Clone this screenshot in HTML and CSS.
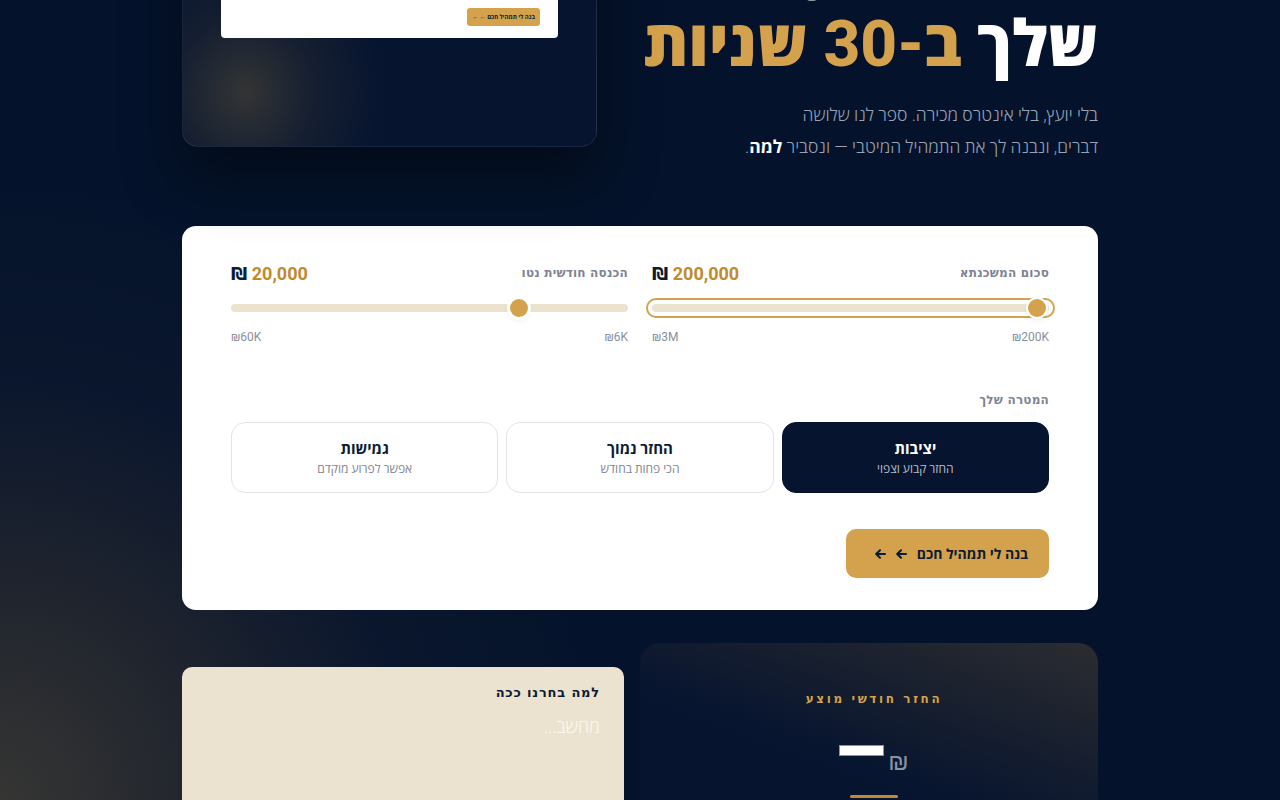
FILE: index.html
```html
<!DOCTYPE html>
<html lang="he" dir="rtl">
<head>
<meta charset="utf-8">
<title>מחשבון תמהיל משכנתא</title>
<link rel="stylesheet" href="styles.css">
</head>
<body>
<div class="page">
  <section class="hero">
    <div class="hero-text">
      <h1 class="title"><span class="muted">בנה את</span> <span class="strong">התמהיל</span><br>שלך <span class="gold">ב-30 שניות</span></h1>
      <p class="lead">בלי יועץ, בלי אינטרס מכירה. ספר לנו שלושה<br>דברים, ונבנה לך את התמהיל המיטבי — ונסביר <b>למה</b>.</p>
    </div>
    <div class="preview">
      <div class="mock">
        <div class="mock-btn">בנה לי תמהיל חכם ← ←</div>
      </div>
    </div>
  </section>

  <section class="calc">
    <div class="sliders">
      <div class="field">
        <div class="field-head">
          <span class="label">סכום המשכנתא</span>
          <span class="value"><span class="cur">₪</span> 200,000</span>
        </div>
        <div class="track focus">
          <span class="thumb" style="right:0%"></span>
        </div>
        <div class="range"><span>₪200K</span><span>₪3M</span></div>
      </div>
      <div class="field">
        <div class="field-head">
          <span class="label">הכנסה חודשית נטו</span>
          <span class="value"><span class="cur">₪</span> 20,000</span>
        </div>
        <div class="track">
          <span class="thumb" style="right:27.4%"></span>
        </div>
        <div class="range"><span>₪6K</span><span>₪60K</span></div>
      </div>
    </div>

    <div class="label goal-label">המטרה שלך</div>
    <div class="goals">
      <div class="goal active"><strong>יציבות</strong><span>החזר קבוע וצפוי</span></div>
      <div class="goal"><strong>החזר נמוך</strong><span>הכי פחות בחודש</span></div>
      <div class="goal"><strong>גמישות</strong><span>אפשר לפרוע מוקדם</span></div>
    </div>

    <div class="actions">
      <button class="cta">בנה לי תמהיל חכם
        <svg class="arrow" width="11" height="10" viewBox="0 0 11 10"><path d="M10 5H1.5M5 1.2L1.2 5 5 8.8" fill="none" stroke="#0b1b33" stroke-width="2" stroke-linecap="round" stroke-linejoin="round"/></svg>
        <svg class="arrow" width="11" height="10" viewBox="0 0 11 10"><path d="M10 5H1.5M5 1.2L1.2 5 5 8.8" fill="none" stroke="#0b1b33" stroke-width="2" stroke-linecap="round" stroke-linejoin="round"/></svg>
      </button>
    </div>
  </section>

  <section class="results">
    <div class="result">
      <div class="result-label">החזר חודשי מוצע</div>
      <div class="amount"><span class="skeleton"></span><span class="shekel">₪</span></div>
      <div class="underline"></div>
    </div>
    <div class="why">
      <div class="why-title">למה בחרנו ככה</div>
      <div class="why-text">מחשב...</div>
    </div>
  </section>
</div>
</body>
</html>
```

FILE: styles.css
```css
* { box-sizing: border-box; }
html, body { margin: 0; padding: 0; }
body {
  width: 1280px;
  height: 800px;
  overflow: hidden;
  font-family: "Roboto", "Open Sans", sans-serif;
  color: #0b1b33;
  background:
    radial-gradient(ellipse 600px 620px at 0% 100%, rgba(56,55,52,0.95) 0%, rgba(38,40,46,0.8) 35%, rgba(20,28,48,0.4) 68%, rgba(4,19,43,0) 100%),
    #04132b;
}
.page {
  width: 916px;
  margin: -200px auto 0;
}

/* hero */
.hero {
  display: grid;
  grid-template-columns: 458px 415px;
  column-gap: 43px;
  align-items: start;
}
.hero-text { padding-top: 146px; text-align: right; }
.title {
  margin: 0;
  font-size: 64px;
  line-height: 66px;
  font-weight: 800;
  color: #fff;
}
.title .muted { color: #8a93a6; font-weight: 300; }
.title .gold { color: #d4a24c; }
.lead {
  margin: 21px 0 0;
  font-size: 17.5px;
  line-height: 32px;
  font-weight: 300;
  color: #9aa2b3;
}
.lead b { color: #fff; font-weight: 700; }

.preview {
  height: 300px;
  margin-top: 47px;
  border-radius: 16px;
  border: 1px solid rgba(255,255,255,0.08);
  background:
    radial-gradient(ellipse 140px 150px at 15% 82%, rgba(66,63,54,0.75) 0%, rgba(40,44,50,0.45) 50%, rgba(6,20,48,0) 100%),
    #061430;
  box-shadow: 0 30px 60px rgba(0,0,0,0.45);
  padding: 38px 38px 0;
}
.mock {
  height: 152px;
  background: #fff;
  border-radius: 4px;
  display: flex;
  align-items: flex-end;
  padding: 0 18px 12px;
}
.mock-btn {
  background: #d4a24c;
  color: #0b1b33;
  font-size: 6px;
  font-weight: 700;
  border-radius: 3px;
  width: 73px;
  height: 18px;
  display: flex;
  align-items: center;
  justify-content: center;
}

/* calculator card */
.calc {
  margin-top: 63px;
  background: #fff;
  border-radius: 14px;
  padding: 34px 49px 32px;
}
.sliders {
  display: grid;
  grid-template-columns: 1fr 1fr;
  column-gap: 24px;
}
.field-head {
  display: flex;
  justify-content: space-between;
  align-items: center;
  height: 26px;
}
.label {
  font-family: "DejaVu Sans", sans-serif;
  font-size: 12px;
  font-weight: 700;
  letter-spacing: 0.2px;
  color: #7d8494;
}
.value {
  font-size: 18px;
  font-weight: 700;
  color: #c08a30;
  direction: ltr;
}
.value .cur { color: #0b1b33; font-family: "DejaVu Sans", sans-serif; }
.track {
  position: relative;
  height: 8px;
  margin: 18px 0 0;
  border-radius: 4px;
  background: #ece3cf;
}
.track.focus {
  outline: 2px solid #d4a24c;
  outline-offset: 4px;
}
.thumb {
  position: absolute;
  top: 50%;
  width: 18px;
  height: 18px;
  margin: -9px -9px 0 0;
  border-radius: 50%;
  background: #d4a24c;
  box-shadow: 0 0 0 3px #fff, 0 2px 6px rgba(0,0,0,0.15);
}
.track.focus .thumb { margin-right: 3px; box-shadow: 0 0 0 2px #fff, 0 2px 6px rgba(0,0,0,0.12); }
.range {
  display: flex;
  justify-content: space-between;
  margin-top: 16px;
  font-size: 12px;
  color: #8a90a0;
  line-height: 18px;
}

.goal-label { margin-top: 44px; line-height: 20px; }
.goals {
  margin-top: 12px;
  display: grid;
  grid-template-columns: repeat(3, 1fr);
  gap: 8px;
}
.goal {
  height: 71px;
  border: 1px solid #e2e4e9;
  border-radius: 14px;
  display: flex;
  flex-direction: column;
  align-items: center;
  justify-content: center;
  gap: 2px;
  background: #fff;
}
.goal strong { font-size: 15px; font-weight: 700; color: #0b1b33; line-height: 20px; }
.goal span { font-size: 12px; color: #7d8494; line-height: 16px; }
.goal.active { background: #061430; border-color: #061430; }
.goal.active strong { color: #fff; }
.goal.active span { color: #b8bfcc; }

.actions { margin-top: 36px; display: flex; }
.cta {
  width: 203px;
  height: 49px;
  border: 0;
  border-radius: 10px;
  background: #d4a24c;
  color: #0b1b33;
  font-family: inherit;
  font-size: 14px;
  font-weight: 700;
  display: flex;
  align-items: center;
  justify-content: center;
  gap: 10px;
  padding: 0 0 0 8px;
}
.cta .arrow { display: block; flex: none; }

/* results */
.results {
  margin-top: 33px;
  display: grid;
  grid-template-columns: 458px 442px;
  column-gap: 16px;
  align-items: start;
}
.result {
  height: 200px;
  border-radius: 20px;
  background:
    linear-gradient(200deg, rgba(44,45,50,1) 0%, rgba(30,35,46,0.9) 25%, rgba(6,20,48,0) 60%),
    #061430;
  display: flex;
  flex-direction: column;
  align-items: center;
  padding-top: 48px;
  padding-left: 10px;
}
.result-label {
  font-family: "DejaVu Sans", sans-serif;
  font-size: 12px;
  font-weight: 700;
  letter-spacing: 2.6px;
  color: #d4a24c;
  line-height: 16px;
}
.amount {
  margin-top: 38px;
  display: flex;
  align-items: flex-start;
  direction: ltr;
  gap: 4px;
}
.skeleton {
  width: 45px;
  height: 11px;
  background: #fff;
  border: 1px solid #8a93a6;
}
.shekel {
  margin-top: 4px;
  font-family: "DejaVu Sans", sans-serif;
  font-weight: 200;
  font-size: 24px;
  line-height: 26px;
  color: #8a93a6;
}
.underline {
  margin-top: 20px;
  width: 48px;
  height: 3px;
  border-radius: 2px;
  background: #c08a30;
}
.why {
  margin-top: 24px;
  height: 200px;
  background: #ebe3cf;
  border-radius: 10px;
  padding: 16px 24px;
}
.why-title {
  font-family: "DejaVu Sans", sans-serif;
  font-size: 13px;
  font-weight: 700;
  letter-spacing: 0.8px;
  color: #0b1b33;
  line-height: 20px;
}
.why-text {
  margin-top: 12px;
  font-size: 18px;
  font-weight: 300;
  color: #fbf8f0;
  line-height: 24px;
}
```
